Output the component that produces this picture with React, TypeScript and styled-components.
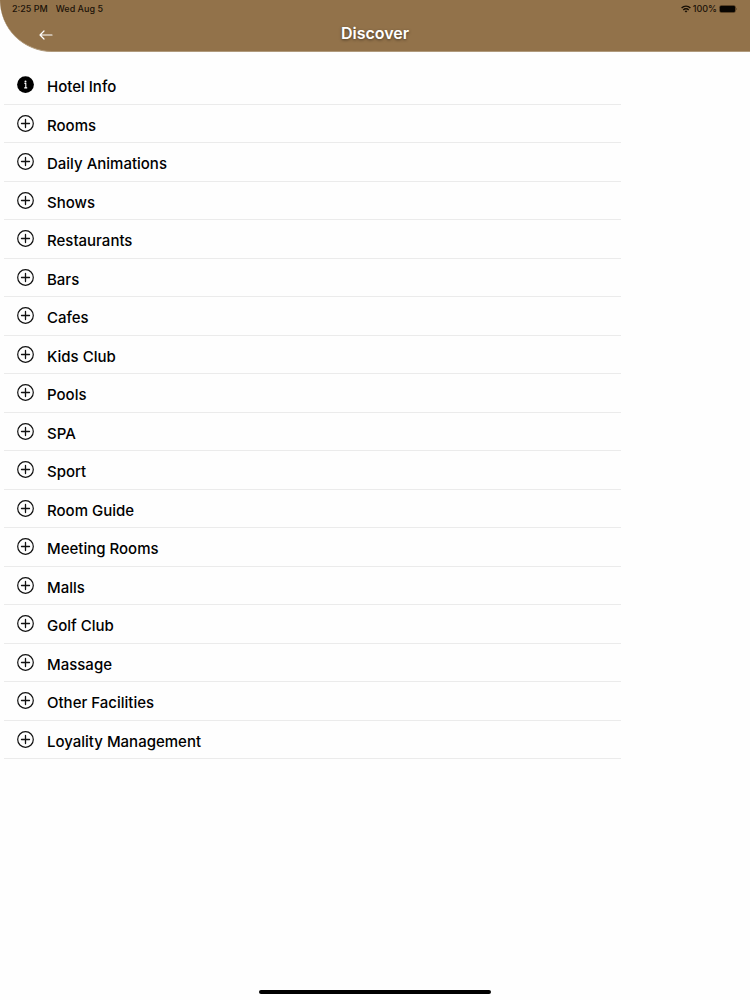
import React from "react";
import styled, { createGlobalStyle } from "styled-components";

const GlobalStyle = createGlobalStyle`
  * { box-sizing: border-box; }
  body {
    margin: 0;
    background: #fefefe;
    color: #000;
    font-family: Inter, "Liberation Sans", sans-serif;
  }
`;

const Page = styled.div`
  min-height: 100vh;
  display: flex;
  flex-direction: column;
`;

const Header = styled.header`
  background: #92724a;
  border-bottom-left-radius: 52px;
  border-bottom: 1px solid #b09a7c;
`;

const StatusBar = styled.div`
  display: flex;
  justify-content: space-between;
  height: 18px;
  padding: 0 12px;
  color: #1c1309;
  font-size: 9px;
  font-weight: 500;
  line-height: 18px;
`;

const StatusGroup = styled.div<{ $gap: number }>`
  display: flex;
  align-items: center;
  gap: ${(p) => p.$gap}px;
`;

const NavBar = styled.div`
  display: grid;
  grid-template-columns: 1fr auto 1fr;
  align-items: center;
  height: 33px;
  padding: 0 38px 4px;
`;

const BackButton = styled.button`
  justify-self: start;
  display: flex;
  padding: 4px 0 0;
  border: 0;
  background: none;
  color: #fff;
  cursor: pointer;
`;

const Title = styled.h1`
  margin: 0;
  color: #fff;
  font-size: 16px;
  font-weight: 600;
  line-height: 20px;
  text-shadow: 0 1px 3px rgba(0, 0, 0, 0.5);
`;

const List = styled.ul`
  width: 82.3%;
  margin: 14px 0 24px 4px;
  padding: 0;
  list-style: none;
`;

const Item = styled.li`
  border-bottom: 1px solid #ebebeb;
`;

const ItemButton = styled.button`
  display: flex;
  align-items: flex-start;
  gap: 13px;
  width: 100%;
  padding: 10px 13px 5px;
  border: 0;
  background: none;
  color: inherit;
  font: inherit;
  font-size: 15px;
  font-weight: 500;
  line-height: 1.5;
  text-align: left;
  cursor: pointer;
`;

const IconSvg = styled.svg`
  flex: none;
  display: block;
`;

const HomeIndicator = styled.div`
  width: 31%;
  height: 4px;
  margin: auto auto 6px;
  border-radius: 2px;
  background: #000;
`;

const InfoIcon = () => (
  <IconSvg width="17" height="18" viewBox="0 0 17 18" aria-hidden="true">
    <circle cx="8.5" cy="8.6" r="8.4" fill="#000" />
    <circle cx="8.5" cy="5.4" r="1" fill="#fff" />
    <path d="M7.4 7.4h1.4v4.4M7.2 11.9h3" fill="none" stroke="#fff" strokeWidth="1.1" />
  </IconSvg>
);

const PlusIcon = () => (
  <IconSvg width="17" height="18" viewBox="0 0 17 18" aria-hidden="true">
    <circle cx="8.5" cy="8.5" r="7.8" fill="none" stroke="#111" strokeWidth="1.2" />
    <path d="M8.5 4.5v8M4.5 8.5h8" stroke="#111" strokeWidth="1.3" strokeLinecap="round" />
  </IconSvg>
);

const ArrowIcon = () => (
  <IconSvg width="15" height="12" viewBox="0 0 15 12" fill="none" stroke="currentColor" strokeWidth="1.2" strokeLinecap="round" strokeLinejoin="round" aria-hidden="true">
    <path d="M14 6H2M6 2 2 6l4 4" />
  </IconSvg>
);

const WifiIcon = () => (
  <IconSvg width="10" height="8" viewBox="0 0 10 8" fill="none" stroke="#160e05" strokeWidth="1.4" aria-hidden="true">
    <path d="M.6 3A6.2 6.2 0 0 1 9.4 3M2.3 4.9a3.8 3.8 0 0 1 5.4 0" />
    <path d="M5 7.6 3.6 6.2a2 2 0 0 1 2.8 0Z" fill="#160e05" stroke="none" />
  </IconSvg>
);

const BatteryIcon = () => (
  <IconSvg width="19" height="8" viewBox="0 0 19 8" aria-hidden="true">
    <rect x=".3" y=".3" width="16.4" height="7.4" rx="2" fill="#4a351d" />
    <rect x="1" y="1" width="15" height="6" rx="1.2" fill="#080502" />
    <path d="M17.4 2.7q1.2 1.3 0 2.6Z" fill="#3b2914" />
  </IconSvg>
);

const sections = [
  "Hotel Info",
  "Rooms",
  "Daily Animations",
  "Shows",
  "Restaurants",
  "Bars",
  "Cafes",
  "Kids Club",
  "Pools",
  "SPA",
  "Sport",
  "Room Guide",
  "Meeting Rooms",
  "Malls",
  "Golf Club",
  "Massage",
  "Other Facilities",
  "Loyality Management",
];

export default function App() {
  return (
    <Page>
      <GlobalStyle />
      <Header>
        <StatusBar>
          <StatusGroup $gap={8}>
            <span>2:25 PM</span>
            <span>Wed Aug 5</span>
          </StatusGroup>
          <StatusGroup $gap={2}>
            <WifiIcon />
            <span>100%</span>
            <BatteryIcon />
          </StatusGroup>
        </StatusBar>
        <NavBar>
          <BackButton type="button" aria-label="Back">
            <ArrowIcon />
          </BackButton>
          <Title>Discover</Title>
        </NavBar>
      </Header>
      <main>
        <List>
          {sections.map((name, index) => (
            <Item key={name}>
              <ItemButton type="button">
                {index === 0 ? <InfoIcon /> : <PlusIcon />}
                <span>{name}</span>
              </ItemButton>
            </Item>
          ))}
        </List>
      </main>
      <HomeIndicator />
    </Page>
  );
}
